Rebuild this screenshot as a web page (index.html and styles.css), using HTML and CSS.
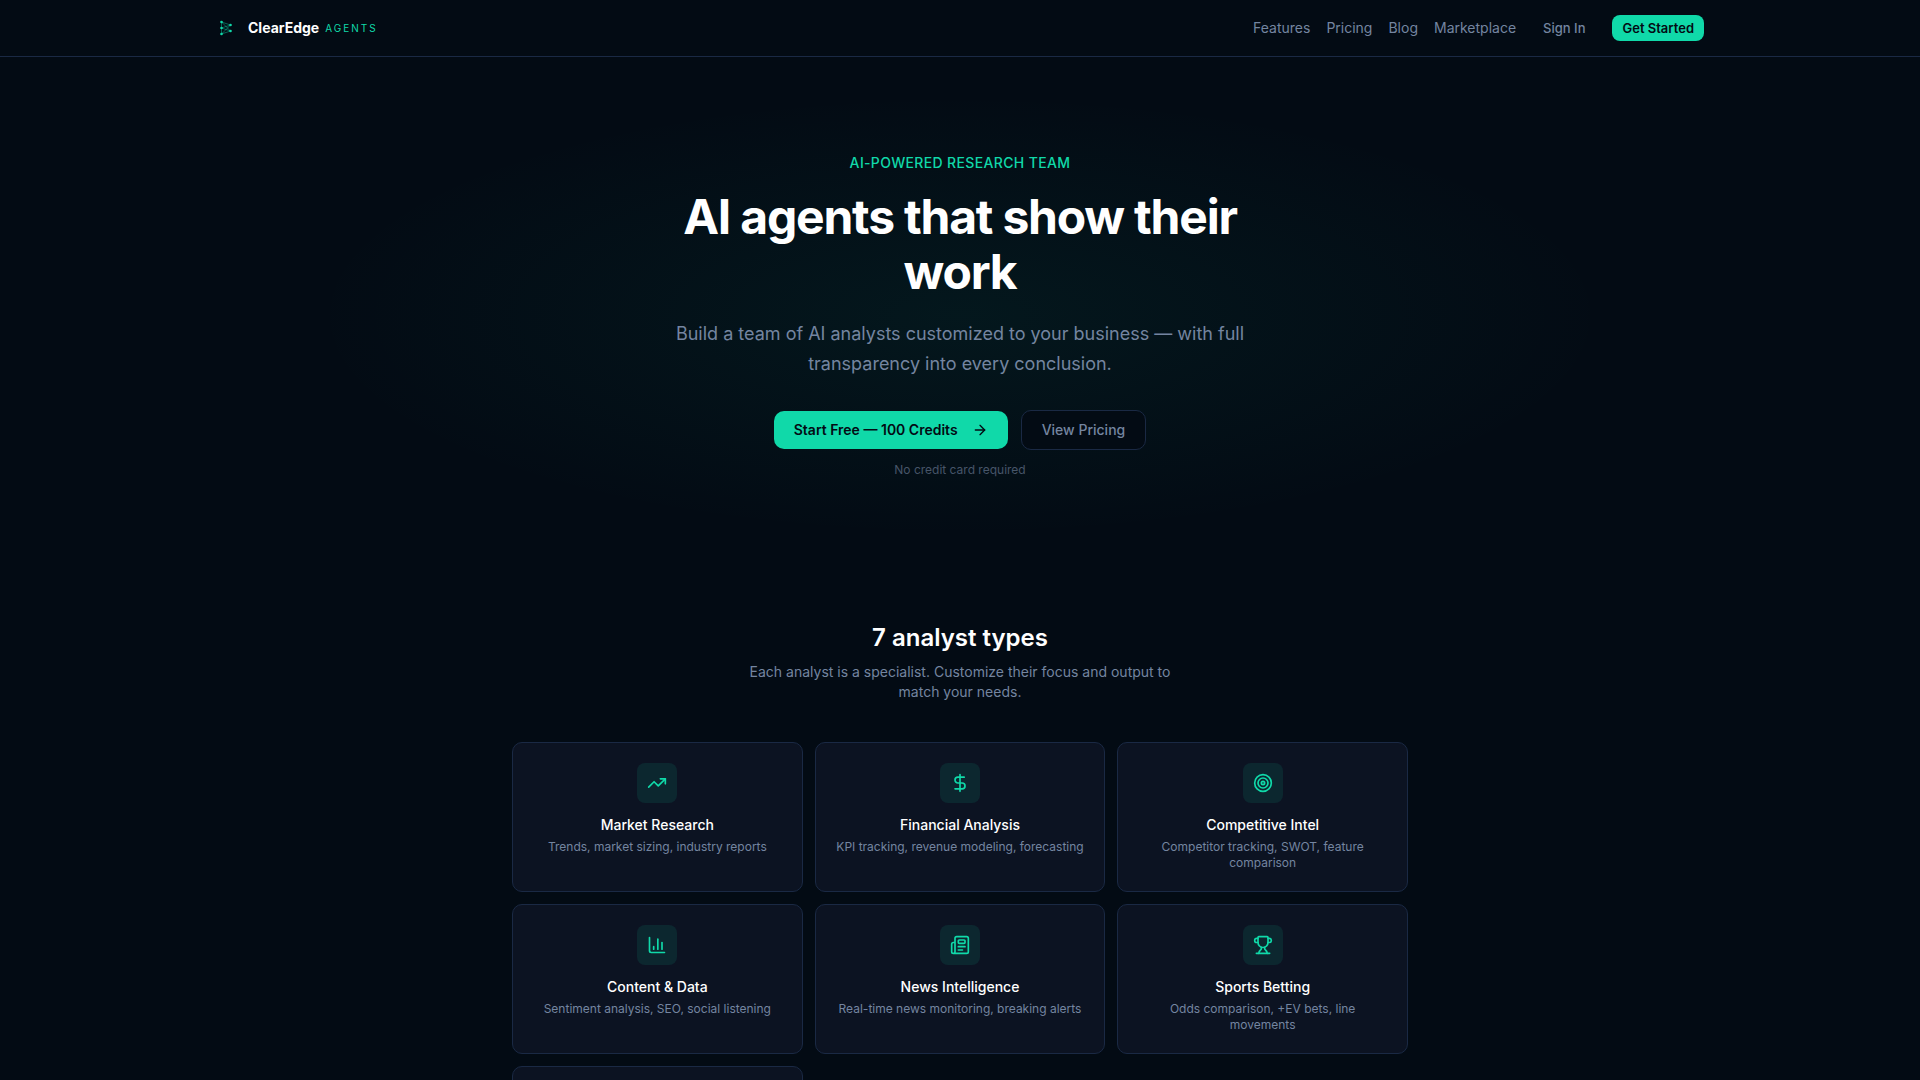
FILE: index.html
```html
<!DOCTYPE html>
<html lang="en">
<head>
<meta charset="utf-8">
<meta name="viewport" content="width=device-width, initial-scale=1">
<title>ClearEdge Agents</title>
<link rel="stylesheet" href="styles.css">
</head>
<body>
<header class="site-header">
  <div class="header-inner">
    <a class="brand" href="#">
      <svg class="brand-mark" viewBox="0 0 24 24" aria-hidden="true">
        <path d="M5.500 6v12M5.500 6l9 3M14.500 15l-9 3M5.500 12l9-3M5.500 12l9 3M5.500 6l9 9M5.500 18l9-9" fill="none" stroke="currentColor" stroke-width=".8" opacity=".55"/>
        <g fill="currentColor">
          <circle cx="5.500" cy="6" r="1.300"/><circle cx="5.500" cy="12" r="1.300"/><circle cx="5.500" cy="18" r="1.300"/>
          <circle cx="14.500" cy="9" r="1.300"/><circle cx="14.500" cy="15" r="1.300"/>
        </g>
      </svg>
      <span class="brand-name">ClearEdge</span>
      <span class="brand-tag">AGENTS</span>
    </a>
    <nav class="nav">
      <a class="nav-link" href="#">Features</a>
      <a class="nav-link" href="#">Pricing</a>
      <a class="nav-link" href="#">Blog</a>
      <a class="nav-link" href="#">Marketplace</a>
      <button class="btn-small btn-ghost" type="button">Sign In</button>
      <button class="btn-small btn-accent" type="button">Get Started</button>
    </nav>
  </div>
</header>
<main>
  <section class="hero">
    <div class="hero-inner">
      <p class="eyebrow">AI-POWERED RESEARCH TEAM</p>
      <h1 class="hero-title">AI agents that show their work</h1>
      <p class="hero-text">Build a team of AI analysts customized to your business — with full transparency into every conclusion.</p>
      <div class="hero-actions">
        <button class="btn btn-accent" type="button">Start Free — 100 Credits
          <svg class="btn-icon" viewBox="0 0 24 24" aria-hidden="true"><path d="M5 12h14"/><path d="m12 5 7 7-7 7"/></svg>
        </button>
        <button class="btn btn-outline" type="button">View Pricing</button>
      </div>
      <p class="hero-note">No credit card required</p>
    </div>
  </section>
  <section class="analysts">
    <h2 class="section-title">7 analyst types</h2>
    <p class="section-text">Each analyst is a specialist. Customize their focus and output to match your needs.</p>
    <div class="card-grid">
      <article class="card">
        <div class="card-icon"><svg viewBox="0 0 24 24" aria-hidden="true"><path d="M16 7h6v6"/><path d="m22 7-8.500 8.500-5-5L2 17"/></svg></div>
        <h3 class="card-title">Market Research</h3>
        <p class="card-text">Trends, market sizing, industry reports</p>
      </article>
      <article class="card">
        <div class="card-icon"><svg viewBox="0 0 24 24" aria-hidden="true"><path d="M12 2v20"/><path d="M17 5H9.500a3.500 3.500 0 0 0 0 7h5a3.500 3.500 0 0 1 0 7H6"/></svg></div>
        <h3 class="card-title">Financial Analysis</h3>
        <p class="card-text">KPI tracking, revenue modeling, forecasting</p>
      </article>
      <article class="card">
        <div class="card-icon"><svg viewBox="0 0 24 24" aria-hidden="true"><circle cx="12" cy="12" r="10"/><circle cx="12" cy="12" r="6"/><circle cx="12" cy="12" r="2"/></svg></div>
        <h3 class="card-title">Competitive Intel</h3>
        <p class="card-text">Competitor tracking, SWOT, feature comparison</p>
      </article>
      <article class="card">
        <div class="card-icon"><svg viewBox="0 0 24 24" aria-hidden="true"><path d="M3 3v16a2 2 0 0 0 2 2h16"/><path d="M18 17V9"/><path d="M13 17V5"/><path d="M8 17v-3"/></svg></div>
        <h3 class="card-title">Content &amp; Data</h3>
        <p class="card-text">Sentiment analysis, SEO, social listening</p>
      </article>
      <article class="card">
        <div class="card-icon"><svg viewBox="0 0 24 24" aria-hidden="true"><path d="M15 18h-5"/><path d="M18 14h-8"/><path d="M4 22h16a2 2 0 0 0 2-2V4a2 2 0 0 0-2-2H8a2 2 0 0 0-2 2v16a2 2 0 0 1-4 0v-9a2 2 0 0 1 2-2h2"/><rect width="8" height="4" x="10" y="6" rx="1"/></svg></div>
        <h3 class="card-title">News Intelligence</h3>
        <p class="card-text">Real-time news monitoring, breaking alerts</p>
      </article>
      <article class="card">
        <div class="card-icon"><svg viewBox="0 0 24 24" aria-hidden="true"><path d="M10 14.660v1.626a2 2 0 0 1-.976 1.696A5 5 0 0 0 7 21.978"/><path d="M14 14.660v1.626a2 2 0 0 0 .976 1.696A5 5 0 0 1 17 21.978"/><path d="M18 9h1.500a1 1 0 0 0 0-5H18"/><path d="M4 22h16"/><path d="M6 9a6 6 0 0 0 12 0V3a1 1 0 0 0-1-1H7a1 1 0 0 0-1 1z"/><path d="M6 9H4.500a1 1 0 0 1 0-5H6"/></svg></div>
        <h3 class="card-title">Sports Betting</h3>
        <p class="card-text">Odds comparison, +EV bets, line movements</p>
      </article>
      <article class="card"></article>
    </div>
  </section>
</main>
</body>
</html>
```
FILE: styles.css
```css
:root {
  --bg: #030b14;
  --card: #0c1322;
  --line: #1a2944;
  --accent: #10d9a9;
  --text: #ffffff;
  --muted: #7485a0;
  --faint: #475569;
}

* { box-sizing: border-box; margin: 0; padding: 0; }

html { scrollbar-width: none; }

body {
  background: var(--bg);
  color: var(--text);
  font-family: Inter, "Liberation Sans", sans-serif;
  font-size: 14px;
  line-height: 20px;
}

a { color: inherit; text-decoration: none; }

button {
  font: inherit;
  color: inherit;
  background: none;
  border: 0;
  cursor: pointer;
}

.site-header { border-bottom: 1px solid var(--line); }

.header-inner {
  display: flex;
  align-items: center;
  justify-content: space-between;
  max-width: 1536px;
  height: 56px;
  margin: 0 auto;
  padding: 0 24px;
}

.brand { display: flex; align-items: center; }
.brand-mark { width: 24px; height: 24px; margin-right: 8px; color: var(--accent); }
.brand-name { font-weight: 700; margin-right: 6px; }
.brand-tag { color: var(--accent); font-size: 10px; letter-spacing: 2px; }

.nav { display: flex; align-items: center; gap: 16px; color: var(--muted); }

.btn-small {
  padding: 5px 10px;
  border-radius: 8px;
  font-size: 13px;
  line-height: 16px;
  font-weight: 500;
}

.btn-ghost { border: 1px solid transparent; }

.btn-accent { background: var(--accent); color: var(--bg); font-weight: 600; }

.hero {
  padding: 96px 24px;
  background: radial-gradient(ellipse 34% 43% at center, rgba(16, 217, 169, 0.06), transparent);
}

.hero-inner {
  display: flex;
  flex-direction: column;
  align-items: center;
  max-width: 640px;
  margin: 0 auto;
  text-align: center;
}

.eyebrow { color: var(--accent); font-weight: 500; letter-spacing: 0.025em; }

.hero-title {
  margin-top: 16px;
  font-size: 48px;
  line-height: 55px;
  font-weight: 700;
  letter-spacing: -0.025em;
}

.hero-text { margin-top: 20px; color: var(--muted); font-size: 18px; line-height: 30px; }

.hero-actions {
  display: flex;
  flex-wrap: wrap;
  align-items: center;
  justify-content: center;
  gap: 13px;
  margin-top: 31px;
}

.btn {
  display: flex;
  align-items: center;
  gap: 14px;
  padding: 9px 20px;
  border-radius: 10px;
  font-size: 14px;
}

.btn-icon { width: 16px; height: 16px; }

.btn-outline {
  border: 1px solid var(--line);
  background: var(--bg);
  color: var(--muted);
  font-weight: 500;
}

.btn-icon,
.card-icon svg {
  fill: none;
  stroke: currentColor;
  stroke-width: 2;
  stroke-linecap: round;
  stroke-linejoin: round;
}

.hero-note { margin-top: 12px; color: var(--faint); font-size: 12px; line-height: 16px; }

.analysts {
  max-width: 944px;
  margin: 0 auto;
  padding: 48px 24px;
  text-align: center;
}

.section-title { font-size: 24px; line-height: 32px; font-weight: 600; }
.section-text { max-width: 448px; margin: 8px auto 40px; color: var(--muted); }

.card-grid {
  display: grid;
  grid-template-columns: repeat(3, 1fr);
  grid-auto-rows: 1fr;
  gap: 12px;
}

.card {
  display: flex;
  flex-direction: column;
  align-items: center;
  padding: 20px;
  border: 1px solid var(--line);
  border-radius: 10px;
  background: var(--card);
}

.card-icon {
  display: grid;
  place-items: center;
  width: 40px;
  height: 40px;
  margin-bottom: 12px;
  border-radius: 8px;
  background: rgba(16, 217, 169, 0.1);
  color: var(--accent);
}

.card-icon svg { width: 20px; height: 20px; }

.card-title { font-size: 14px; font-weight: 500; }
.card-text { margin-top: 4px; color: var(--muted); font-size: 12px; line-height: 16px; }

@media (max-width: 800px) {
  .header-inner { height: auto; flex-wrap: wrap; gap: 12px; padding: 12px 24px; }
  .nav { flex-wrap: wrap; }
  .hero-title { font-size: 36px; line-height: 44px; }
  .card-grid { grid-template-columns: 1fr; }
}
```
